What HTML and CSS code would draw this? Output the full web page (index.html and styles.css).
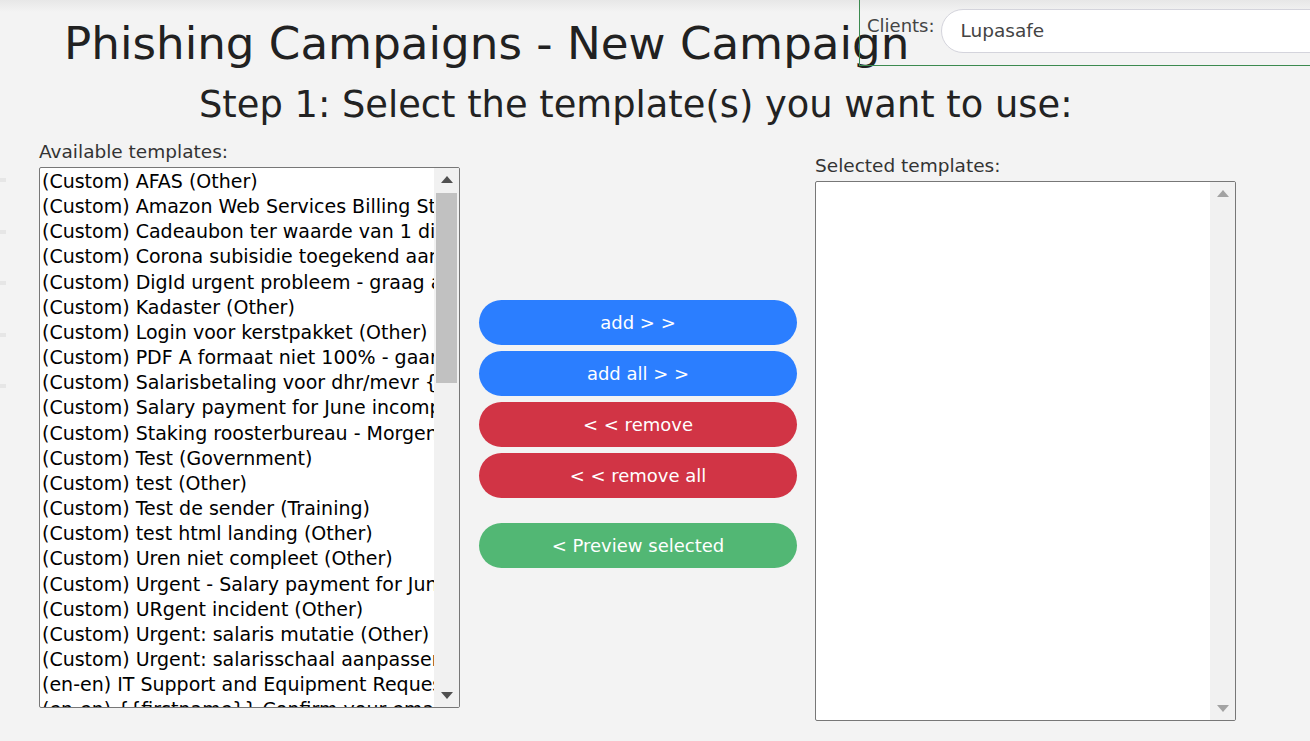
FILE: index.html
```html
<!DOCTYPE html>
<html lang="en">
<head>
<meta charset="utf-8">
<title>Phishing Campaigns - New Campaign</title>
<link rel="stylesheet" href="styles.css">
</head>
<body>
<div class="edge-marks"><span></span><span></span><span></span><span></span><span></span></div>

<div class="clients">
  <label class="clients-label">Clients:</label>
  <div class="clients-input">Lupasafe</div>
</div>

<main class="page">
  <h1 class="title">Phishing Campaigns - New Campaign</h1>
  <h2 class="step">Step 1: Select the template(s) you want to use:</h2>

  <div class="columns">
    <section class="col col-left">
      <div class="label">Available templates:</div>
      <div class="listbox">
        <div class="options">
          <div class="opt">(Custom) AFAS (Other)</div>
          <div class="opt">(Custom) Amazon Web Services Billing Statement (Other)</div>
          <div class="opt">(Custom) Cadeaubon ter waarde van 1 dinerbon (Other)</div>
          <div class="opt">(Custom) Corona subisidie toegekend aan medewerkers (Other)</div>
          <div class="opt">(Custom) DigId urgent probleem - graag actie (Government)</div>
          <div class="opt">(Custom) Kadaster (Other)</div>
          <div class="opt">(Custom) Login voor kerstpakket (Other)</div>
          <div class="opt">(Custom) PDF A formaat niet 100% - gaarne controleren (Other)</div>
          <div class="opt">(Custom) Salarisbetaling voor dhr/mevr {firstname} (Other)</div>
          <div class="opt">(Custom) Salary payment for June incomplete (Other)</div>
          <div class="opt">(Custom) Staking roosterbureau - Morgen geen dienst (Other)</div>
          <div class="opt">(Custom) Test (Government)</div>
          <div class="opt">(Custom) test (Other)</div>
          <div class="opt">(Custom) Test de sender (Training)</div>
          <div class="opt">(Custom) test html landing (Other)</div>
          <div class="opt">(Custom) Uren niet compleet (Other)</div>
          <div class="opt">(Custom) Urgent - Salary payment for June (Other)</div>
          <div class="opt">(Custom) URgent incident (Other)</div>
          <div class="opt">(Custom) Urgent: salaris mutatie (Other)</div>
          <div class="opt">(Custom) Urgent: salarisschaal aanpassen (Other)</div>
          <div class="opt">(en-en) IT Support and Equipment Request (Other)</div>
          <div class="opt">(en-en) {{firstname}} Confirm your email (Other)</div>
        </div>
        <div class="scrollbar">
          <div class="arrow arrow-up"></div>
          <div class="track"><div class="thumb"></div></div>
          <div class="arrow arrow-down"></div>
        </div>
      </div>
    </section>

    <section class="col col-mid">
      <button class="btn btn-blue">add &gt; &gt;</button>
      <button class="btn btn-blue">add all &gt; &gt;</button>
      <button class="btn btn-red">&lt; &lt; remove</button>
      <button class="btn btn-red">&lt; &lt; remove all</button>
      <button class="btn btn-green btn-preview">&lt; Preview selected</button>
    </section>

    <section class="col col-right">
      <div class="label">Selected templates:</div>
      <div class="listbox listbox-right">
        <div class="options"></div>
        <div class="scrollbar scrollbar-disabled">
          <div class="arrow arrow-up"></div>
          <div class="track"></div>
          <div class="arrow arrow-down"></div>
        </div>
      </div>
    </section>
  </div>
</main>
</body>
</html>
```

FILE: styles.css
```css
html, body {
  margin: 0;
  padding: 0;
}

body {
  width: 1310px;
  height: 741px;
  overflow: hidden;
  background: linear-gradient(#e7e7e7, #f3f3f3 12px) no-repeat, #f3f3f3;
  font-family: "DejaVu Sans", "Liberation Sans", sans-serif;
  color: #222;
  position: relative;
}

.edge-marks {
  position: absolute;
  left: 0;
  top: 178px;
  display: flex;
  flex-direction: column;
  gap: 47.5px;
}

.edge-marks span {
  display: block;
  width: 6px;
  height: 4px;
  background: #e6e6e6;
}

.clients {
  position: absolute;
  top: 0;
  left: 859px;
  right: 0;
  height: 66px;
  border-left: 1px solid #3b8a4f;
  border-bottom: 1px solid #3b8a4f;
  display: flex;
  align-items: flex-start;
  box-sizing: border-box;
}

.clients-label {
  font-size: 18px;
  color: #444;
  margin: 15px 0 0 7px;
  line-height: 21px;
}

.clients-input {
  margin: 9px 0 0 6px;
  height: 44px;
  flex: 1;
  margin-right: -40px;
  box-sizing: border-box;
  background: #fff;
  border: 1px solid #d4d4dc;
  border-radius: 22px;
  padding: 0 0 0 19px;
  font-size: 18.5px;
  line-height: 42px;
  color: #444;
}

.page {
  padding: 0;
}

.title {
  margin: 17px 0 0 64px;
  font-size: 45.2px;
  font-weight: normal;
  line-height: 53px;
  color: #212121;
}

.step {
  margin: 14px 0 0 199px;
  font-size: 36.8px;
  font-weight: normal;
  line-height: 42px;
  color: #222;
}

.columns {
  display: flex;
  align-items: flex-start;
  padding-left: 39px;
  margin-top: 15px;
}

.col {
  display: flex;
  flex-direction: column;
}

.col-left {
  width: 421px;
}

.col-mid {
  width: 318px;
  margin-left: 19px;
  padding-top: 159px;
  gap: 6px;
}

.col-right {
  width: 421px;
  margin-left: 18px;
  padding-top: 14px;
}

.label {
  font-size: 18.5px;
  line-height: 21px;
  color: #333;
  margin-bottom: 5px;
  padding-left: 0;
}

.listbox {
  height: 541px;
  box-sizing: border-box;
  border: 1px solid #777;
  border-radius: 2px;
  background: #fff;
  display: flex;
  overflow: hidden;
}

.listbox-right {
  height: 540px;
}

.options {
  flex: 1;
  overflow: hidden;
  padding-top: 1px;
  min-width: 0;
}

.opt {
  font-size: 19px;
  line-height: 25.15px;
  padding-left: 2px;
  white-space: nowrap;
  color: #000;
}

.scrollbar {
  width: 25px;
  background: #f1f1f1;
  display: flex;
  flex-direction: column;
}

.arrow {
  height: 23px;
  display: flex;
  align-items: center;
  justify-content: center;
}

.arrow::before {
  content: "";
  width: 0;
  height: 0;
  border-left: 6px solid transparent;
  border-right: 6px solid transparent;
}

.arrow-up::before {
  border-bottom: 7px solid #505050;
}

.arrow-down::before {
  border-top: 7px solid #505050;
}

.scrollbar-disabled .arrow-up::before {
  border-bottom-color: #a3a3a3;
}

.scrollbar-disabled .arrow-down::before {
  border-top-color: #a3a3a3;
}

.track {
  flex: 1;
  padding: 2px 2px 0;
}

.thumb {
  height: 190px;
  background: #c1c1c1;
}

.btn {
  height: 45px;
  border: none;
  border-radius: 23px;
  font-family: "DejaVu Sans", "Liberation Sans", sans-serif;
  font-size: 18px;
  color: #fff;
  cursor: pointer;
  padding: 0;
}

.btn-blue {
  background: #2b7eff;
}

.btn-red {
  background: #d13445;
}

.btn-green {
  background: #52b774;
}

.btn-preview {
  margin-top: 19px;
}
```
